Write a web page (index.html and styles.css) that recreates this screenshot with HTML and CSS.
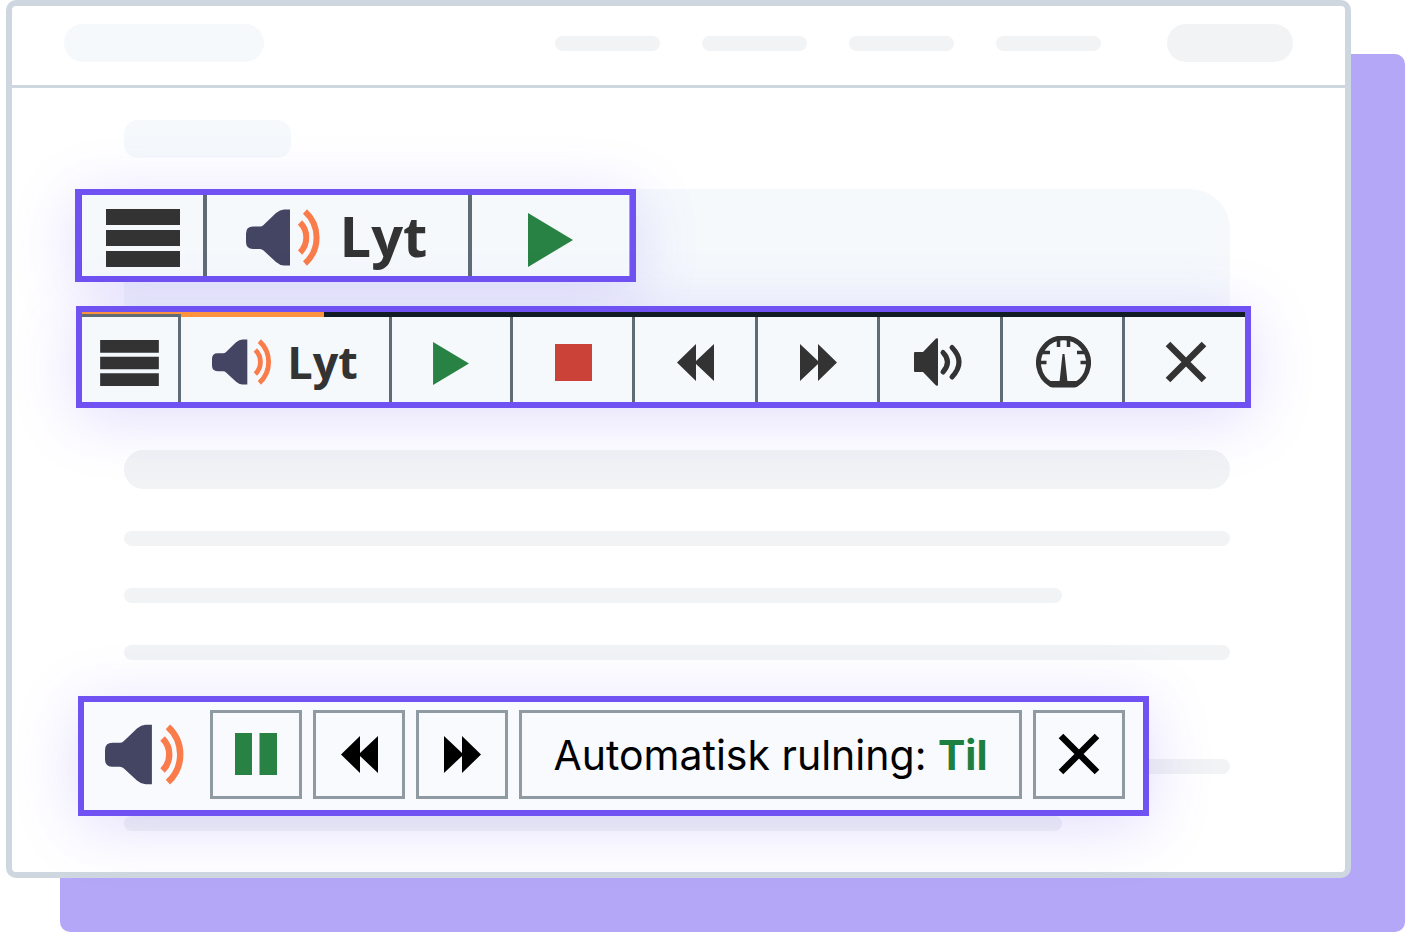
FILE: index.html
```html
<!DOCTYPE html>
<html lang="da">
<head>
<meta charset="utf-8">
<meta name="viewport" content="width=device-width, initial-scale=1">
<title>Lyt</title>
<link rel="stylesheet" href="styles.css">
</head>
<body>
<svg class="sprite" width="0" height="0" aria-hidden="true">
  <symbol id="logo" viewBox="0 0 76 57">
    <path fill="#444463" d="M7 17.500H14Q16 17.500 17.500 16L30 4Q34 .5 38 .5H44V56.500H38Q34 56.500 30 53L17.500 41.500Q16 40 14 40H7Q0 40 0 33V24.500Q0 17.500 7 17.500Z"/>
    <path fill="none" stroke="#f97c4a" stroke-width="6" d="M54 13.500A21 21 0 0 1 54 43.500M59 2.500A35 35 0 0 1 59 54.500"/>
  </symbol>
  <symbol id="menu" viewBox="0 0 74 58"><path d="M0 0H74V16H0ZM0 21H74V37H0ZM0 42H74V58H0Z"/></symbol>
  <symbol id="play" viewBox="0 0 45 54"><path d="M0 0L45 27L0 54Z"/></symbol>
  <symbol id="rewind" viewBox="0 0 37 37"><path d="M0 18.500L19 0V17L37 0V37L19 20V37Z"/></symbol>
  <symbol id="forward" viewBox="0 0 37 37"><path d="M37 18.500L18 0V17L0 0V37L18 20V37Z"/></symbol>
  <symbol id="close" viewBox="0 0 42 42"><path fill="none" stroke="currentColor" stroke-width="6.500" d="M3 3L39 39M39 3L3 39"/></symbol>
</svg>
<div class="scene">
  <div class="backdrop"></div>
  <div class="window">
    <header class="header">
      <span class="ghost ghost-logo"></span>
      <div class="nav">
        <span class="line"></span><span class="line"></span><span class="line"></span><span class="line"></span>
      </div>
      <span class="ghost ghost-button"></span>
    </header>
    <main class="page">
      <div class="article">
        <span class="ghost chip"></span>
        <span class="hero"></span>
        <span class="heading"></span>
        <div class="lines">
          <span class="line"></span><span class="line short"></span><span class="line"></span>
          <span class="line short"></span><span class="line"></span><span class="line short"></span>
        </div>
      </div>
      <div class="players">
        <div class="bar bar-compact">
          <button class="cell cell-menu" aria-label="Menu"><svg class="icon-menu"><use href="#menu"/></svg></button>
          <button class="cell cell-listen"><svg class="icon-logo"><use href="#logo"/></svg><span class="label">Lyt</span></button>
          <button class="cell cell-play" aria-label="Afspil"><svg class="icon-play"><use href="#play"/></svg></button>
        </div>
        <div class="bar bar-full">
          <div class="progress" role="progressbar" aria-label="Fremgang" aria-valuenow="21"><div class="progress-fill" style="width:20.8%"></div></div>
          <div class="cells">
            <button class="cell cell-menu" aria-label="Menu"><svg class="icon-menu"><use href="#menu"/></svg></button>
            <button class="cell cell-listen"><svg class="icon-logo"><use href="#logo"/></svg><span class="label">Lyt</span></button>
            <button class="cell cell-play" aria-label="Afspil"><svg class="icon-play"><use href="#play"/></svg></button>
            <button class="cell" aria-label="Stop"><span class="icon-stop"></span></button>
            <button class="cell" aria-label="Tilbage"><svg class="icon-skip"><use href="#rewind"/></svg></button>
            <button class="cell" aria-label="Frem"><svg class="icon-skip"><use href="#forward"/></svg></button>
            <button class="cell" aria-label="Lydstyrke">
              <svg class="icon-volume" viewBox="0 0 54 48"><path d="M0 15Q0 14 1 14H9L22 .5Q24 -.5 24 1.500V46.500Q24 48.500 22 47.500L9 34H1Q0 34 0 33Z"/><path fill="none" stroke="currentColor" stroke-width="5" stroke-linecap="round" d="M29 14.500Q38 24 29 34M38 9.500Q52 24 38 39"/></svg>
            </button>
            <button class="cell" aria-label="Hastighed">
              <svg class="icon-gauge" viewBox="0 0 55 52"><path fill="none" stroke="currentColor" stroke-width="5" d="M15 48.500A25 25 0 1 1 40 48.500Z"/><path d="M14 45H41L39.500 51.500H15.500ZM26.500 18H28.500L31.500 46H23.500Z"/><path fill="none" stroke="currentColor" stroke-width="3.500" d="M4 26.500H10.500M44.500 26.500H51M6 16.500H14M41 16.500H49M22.500 4V11M32.500 4V11"/></svg>
            </button>
            <button class="cell" aria-label="Luk"><svg class="icon-close"><use href="#close"/></svg></button>
          </div>
        </div>
        <div class="bar bar-mini">
          <svg class="icon-logo"><use href="#logo"/></svg>
          <button class="key" aria-label="Pause"><svg class="icon-pause" viewBox="0 0 42 42"><path d="M0 0H17V42H0ZM24.500 0H42V42H24.500Z"/></svg></button>
          <button class="key" aria-label="Tilbage"><svg class="icon-skip"><use href="#rewind"/></svg></button>
          <button class="key" aria-label="Frem"><svg class="icon-skip"><use href="#forward"/></svg></button>
          <button class="key key-scroll"><span>Automatisk rulning: <strong>Til</strong></span></button>
          <button class="key" aria-label="Luk"><svg class="icon-close"><use href="#close"/></svg></button>
        </div>
      </div>
    </main>
  </div>
</div>
</body>
</html>
```
FILE: styles.css
```css
* { box-sizing: border-box; }
body { margin: 0; background: #fff; font-family: "Open Sans", "Noto Sans", sans-serif; }
.sprite { display: block; }
button {
  margin: 0;
  padding: 0;
  border: 0;
  background: none;
  color: inherit;
  font: inherit;
  cursor: pointer;
}
svg { fill: currentColor; flex: none; }

.scene { display: grid; }
.backdrop {
  grid-area: 1 / 1;
  margin: 54px 1px 0 60px;
  border-radius: 10px;
  background: #b5a7f7;
}
.window {
  grid-area: 1 / 1;
  margin: 0 55px 54px 6px;
  border: 6px solid #ced7df;
  border-radius: 10px;
  background: #fff;
}

.header {
  display: flex;
  align-items: center;
  padding: 18px 52px 23px;
  border-bottom: 3px solid #ced7df;
}
.ghost { display: block; height: 38px; border-radius: 19px; background: #f5f9fc; }
.ghost-logo { width: 200px; }
.ghost-button { width: 126px; background: #f1f3f5; }
.nav { display: flex; gap: 42px; margin: 0 66px 0 auto; }
.nav .line { width: 105px; }
.line { display: block; height: 15px; border-radius: 8px; background: #f1f3f5; }

.page { display: grid; }
.article { grid-area: 1 / 1; padding: 32px 115px 41px 112px; }
.chip { width: 167px; border-radius: 14px; }
.hero {
  display: block;
  height: 180px;
  margin-top: 31px;
  border-radius: 40px;
  background: #f5f9fc;
}
.heading {
  display: block;
  height: 39px;
  margin: 81px 0 42px;
  border-radius: 20px;
  background: #f1f3f5;
}
.lines { display: grid; gap: 42px; }
.short { width: 84.8%; }

.players {
  grid-area: 1 / 1;
  display: flex;
  flex-direction: column;
  align-items: flex-start;
  padding: 101px 94px 0 63px;
}
.bar {
  border: 6px solid #7051f1;
  background: #f5f9fc;
  color: #333;
  box-shadow: 0 10px 64px rgba(112, 81, 241, .2);
}
.cell {
  display: flex;
  flex: 1;
  align-items: center;
  justify-content: center;
  border-right: 3px solid #5f6b75;
}
.cell:last-child { border-right: 0; }
.cell-listen { font-weight: 700; }

.bar-compact { display: flex; width: 561px; height: 93px; font-size: 56px; line-height: 72px; }
.bar-compact .cell { padding-top: 4px; border-right-width: 4px; }
.bar-compact .cell:last-child { border-right: 1px solid #a4abb5; }
.bar-compact .cell-menu { flex: 0 0 126px; border-left: 1px solid #5f6b75; }
.bar-compact .cell-listen { flex: 0 0 265px; gap: 18px; padding-right: 2px; }
.bar-compact .cell-play { padding-top: 8px; }
.bar-compact .label { padding-bottom: 6px; }
.bar-compact .icon-menu { width: 74px; height: 58px; }
.bar-compact .icon-logo { width: 76px; height: 57px; }
.bar-compact .icon-play { width: 45px; height: 54px; }
.icon-play, .icon-pause { color: #278243; }

.bar-full { align-self: stretch; margin: 24px 0 0 1px; font-size: 45px; line-height: 58px; }
.progress { height: 5px; background: #111c24; }
.progress-fill { height: 100%; background: #fd933f; }
.cells { display: flex; height: 85px; }
.bar-full .cell { padding: 5px 0 0 2px; }
.bar-full .cell-menu {
  flex: 0 0 99px;
  margin-top: -3px;
  padding: 6px 2px 0 0;
  border-top: 3px solid #5f6b75;
}
.bar-full .cell-listen { flex: 0 0 211px; gap: 14px; padding-left: 0; }
.bar-full .cell-play { padding: 8px 0 0; }
.bar-full .icon-menu { width: 59px; height: 46px; }
.bar-full .icon-logo { width: 61px; height: 46px; }
.bar-full .icon-play { width: 36px; height: 43px; }
.icon-stop { width: 37px; height: 37px; background: #cb4239; }
.icon-skip { width: 37px; height: 37px; }
.icon-volume { width: 54px; height: 48px; overflow: visible; }
.icon-gauge { width: 55px; height: 52px; }
.icon-close { width: 42px; height: 42px; }

.bar-mini {
  display: flex;
  align-items: center;
  gap: 11px;
  width: 1071px;
  height: 120px;
  margin: 288px 0 0 3px;
  padding: 0 18px 4px 21px;
  background: #f8fafe;
  color: #000;
}
.bar-mini .icon-logo { width: 81px; height: 61px; margin-right: 13px; }
.key {
  display: flex;
  flex: 0 0 92px;
  align-items: center;
  justify-content: center;
  height: 89px;
  border: 3px solid #8f9aa3;
}
.key-scroll { flex: 1; padding-top: 2px; font: 400 41px/50px Inter, sans-serif; }
.key-scroll strong { color: #1d8040; font-weight: 700; }
.icon-pause { width: 42px; height: 42px; }
```
